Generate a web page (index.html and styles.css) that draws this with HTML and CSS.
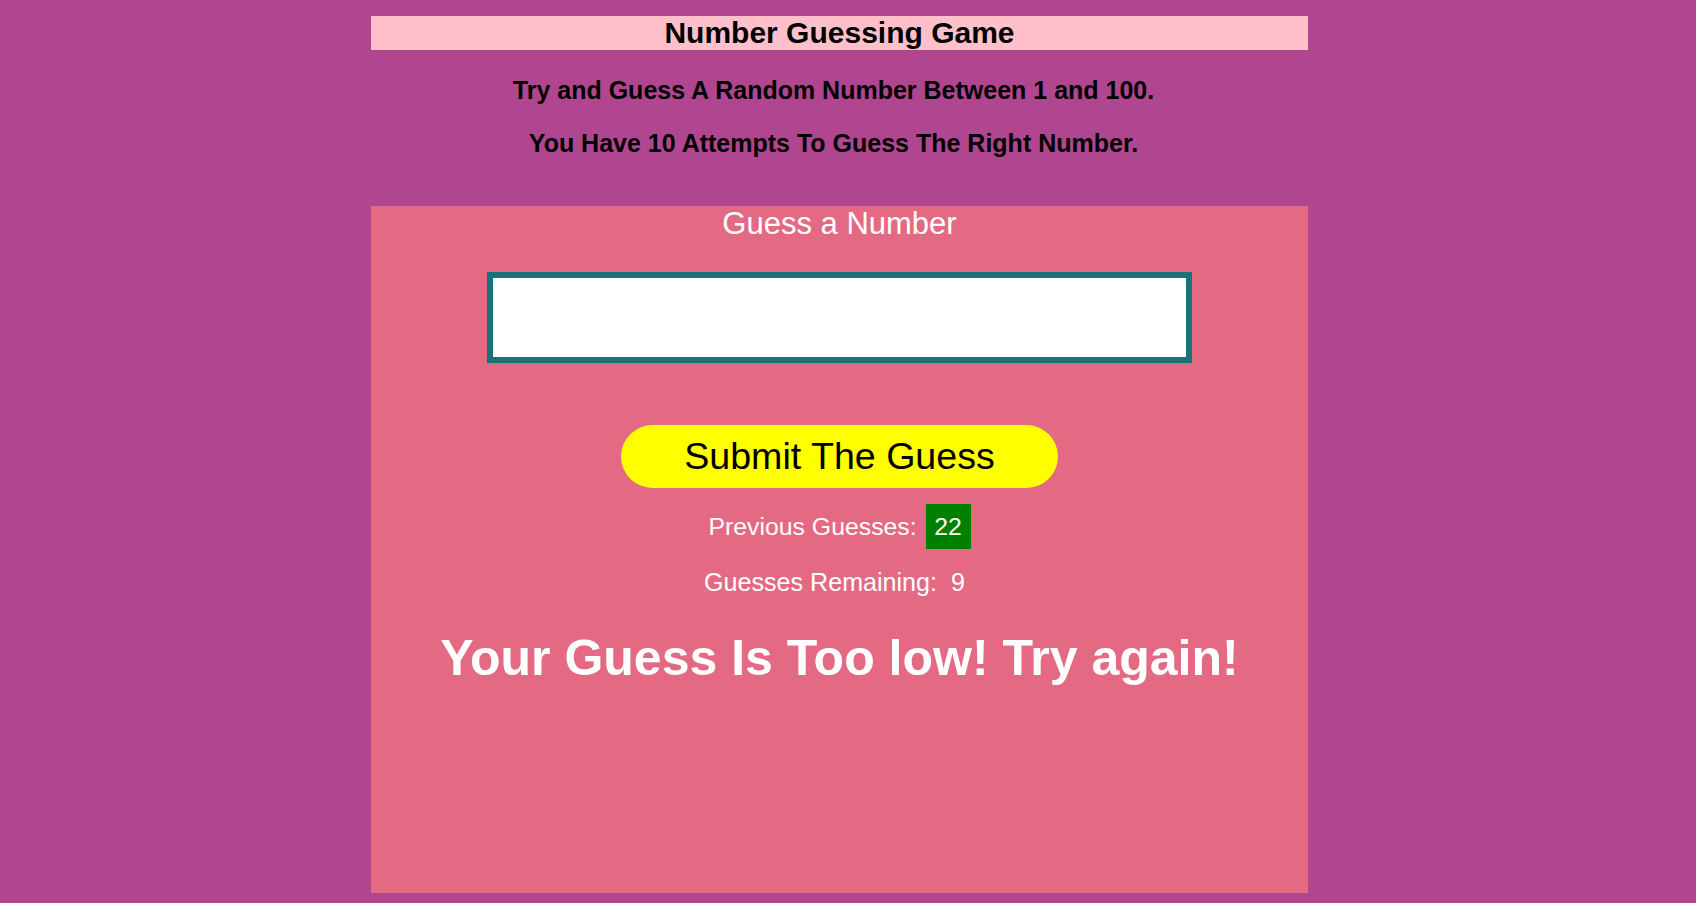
FILE: index.html
```html
<!DOCTYPE html>
<html lang="en">
<head>
<meta charset="utf-8">
<title>Number Guessing Game</title>
<link rel="stylesheet" href="styles.css">
</head>
<body>
<div class="container">
  <h1 class="title">Number Guessing Game</h1>
  <p class="intro intro-first">Try and Guess A Random Number Between 1 and 100.</p>
  <p class="intro intro-second">You Have 10 Attempts To Guess The Right Number.</p>
  <div class="game">
    <label class="label" for="guess">Guess a Number</label>
    <input class="guess-field" type="text" id="guess">
    <button class="submit" type="button">Submit The Guess</button>
    <div class="stat stat-prev">Previous Guesses:&nbsp;<span class="prev-box">22</span></div>
    <div class="stat stat-remaining">Guesses Remaining:&nbsp;&nbsp;9</div>
    <div class="message">Your Guess Is Too low! Try again!</div>
  </div>
</div>
</body>
</html>
```
FILE: styles.css
```css
html, body {
  margin: 0;
  padding: 0;
}
body {
  background: #b04590;
  font-family: "Liberation Sans", Arial, sans-serif;
  min-height: 903px;
}
.container {
  width: 937px;
  margin: 16px 0 0 371px;
  display: flex;
  flex-direction: column;
  align-items: stretch;
}
.title {
  margin: 0;
  height: 34px;
  line-height: 34px;
  font-size: 30px;
  font-weight: bold;
  text-align: center;
  background: #ffc0cb;
  color: #000;
}
.intro {
  margin: 0;
  padding-right: 12px;
  font-size: 25px;
  line-height: 30px;
  font-weight: bold;
  text-align: center;
  color: #000;
}
.intro-first {
  margin-top: 25px;
}
.intro-second {
  margin-top: 23px;
}
.game {
  margin-top: 48px;
  height: 687px;
  background: #e46a84;
  display: flex;
  flex-direction: column;
  align-items: center;
}
.label {
  font-size: 31px;
  line-height: 36px;
  color: #fff;
}
.guess-field {
  margin-top: 30px;
  width: 705px;
  height: 91px;
  box-sizing: border-box;
  border: 6px solid #167378;
  background: #fff;
  padding: 0;
  outline: none;
}
.submit {
  margin-top: 62px;
  width: 437px;
  height: 63px;
  border: none;
  border-radius: 32px;
  background: #ffff00;
  color: #000;
  font-family: "Liberation Sans", Arial, sans-serif;
  font-size: 37.6px;
  padding: 0;
}
.stat {
  color: #fff;
  font-size: 24.8px;
  text-align: center;
}
.stat-prev {
  margin-top: 16px;
  height: 45px;
  line-height: 45px;
  display: flex;
  align-items: center;
}
.prev-box {
  display: inline-block;
  width: 45px;
  height: 45px;
  line-height: 45px;
  background: #008000;
  color: #fff;
  text-align: center;
  margin-left: 2px;
}
.stat-remaining {
  margin-top: 18px;
  padding-right: 10px;
  font-size: 25.1px;
  line-height: 30px;
}
.message {
  margin-top: 33px;
  font-size: 50px;
  line-height: 56px;
  font-weight: bold;
  color: #fff;
}
```
